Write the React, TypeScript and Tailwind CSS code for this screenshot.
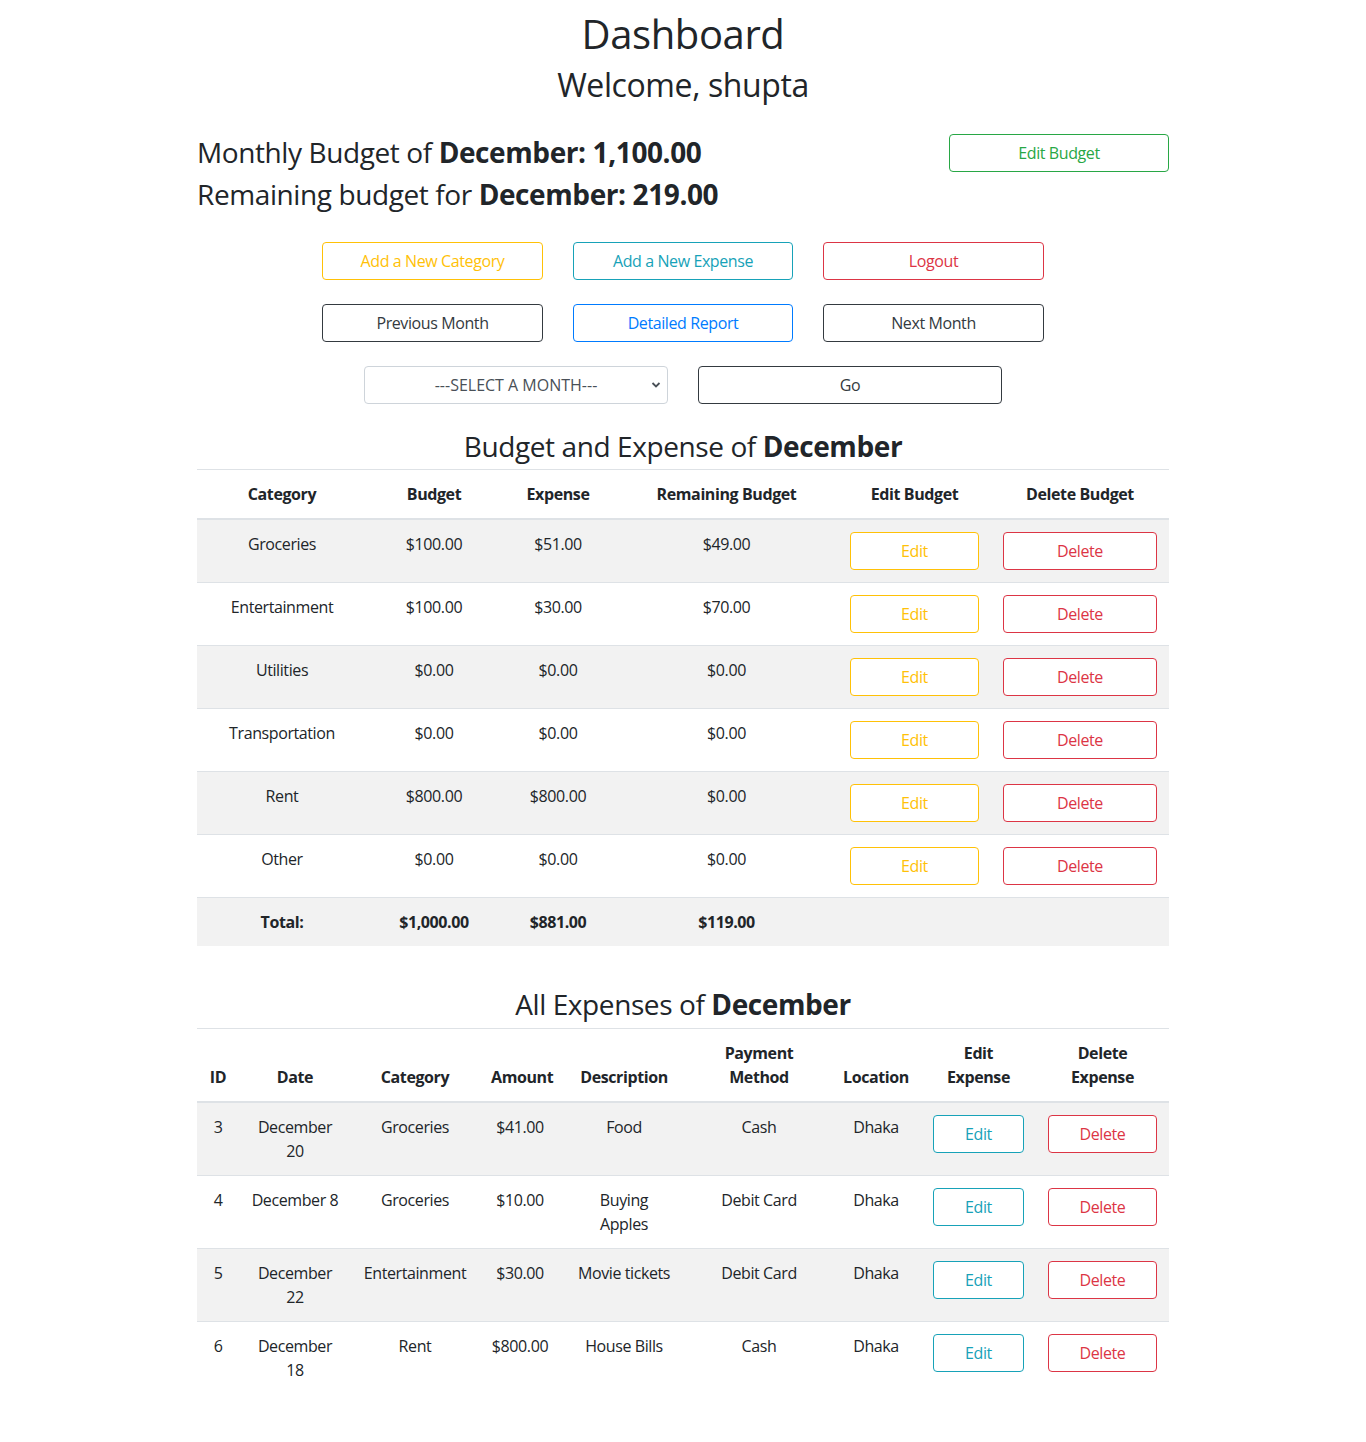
import React from "react";

const font = { fontFamily: '"Open Sans", "Noto Sans", sans-serif' };

const budgetRows = [
  ["Groceries", "$100.00", "$51.00", "$49.00"],
  ["Entertainment", "$100.00", "$30.00", "$70.00"],
  ["Utilities", "$0.00", "$0.00", "$0.00"],
  ["Transportation", "$0.00", "$0.00", "$0.00"],
  ["Rent", "$800.00", "$800.00", "$0.00"],
  ["Other", "$0.00", "$0.00", "$0.00"],
];

const expenses: { id: string; date: string[]; cat: string; amt: string; desc: string[]; pay: string; loc: string }[] = [
  { id: "3", date: ["December", "20"], cat: "Groceries", amt: "$41.00", desc: ["Food"], pay: "Cash", loc: "Dhaka" },
  { id: "4", date: ["December 8"], cat: "Groceries", amt: "$10.00", desc: ["Buying", "Apples"], pay: "Debit Card", loc: "Dhaka" },
  { id: "5", date: ["December", "22"], cat: "Entertainment", amt: "$30.00", desc: ["Movie tickets"], pay: "Debit Card", loc: "Dhaka" },
  { id: "6", date: ["December", "18"], cat: "Rent", amt: "$800.00", desc: ["House Bills"], pay: "Cash", loc: "Dhaka" },
];

function Lines({ lines }: { lines: string[] }) {
  return (
    <>
      {lines.map((l, i) => (
        <div key={i} className="whitespace-nowrap">
          {l}
        </div>
      ))}
    </>
  );
}

export default function App() {
  const td = "px-[12px] pt-[12px] pb-[12px] text-center align-top border-t border-[#dee2e6]";
  const th = "px-[12px] py-[12px] text-center align-bottom font-bold border-t border-b-2 border-[#dee2e6]";
  const btn = "h-[38px] rounded-[4px] border bg-white text-[16px] leading-[24px] px-[12px]";
  return (
    <div className="min-h-[1442px] bg-white text-[#212529] text-[16px] leading-[24px] tracking-[-0.025em]" style={font}>
      <div className="w-[972px] mx-auto">
        <h1 className="text-center text-[40px] leading-[48px] font-medium pt-[10px] mb-[8px]">Dashboard</h1>
        <h2 className="text-center text-[32px] leading-[38px] font-medium mb-[8px]">Welcome, shupta</h2>

        <div className="flex justify-between items-start mt-[31px]">
          <div>
            <h3 className="text-[28px] leading-[34px] font-medium mb-[8px]">
              Monthly Budget of <b className="font-bold">December: 1,100.00</b>
            </h3>
            <h3 className="text-[28px] leading-[34px] font-medium mb-[8px]">
              Remaining budget for <b className="font-bold">December: 219.00</b>
            </h3>
          </div>
          <button className={`${btn} w-[220px] mt-[-1px] border-[#28a745] text-[#28a745]`}>Edit Budget</button>
        </div>

        <div className="flex justify-center gap-[30px] mt-[23px]">
          <button className={`${btn} w-[221px] border-[#ffc107] text-[#ffc107]`}>Add a New Category</button>
          <button className={`${btn} w-[220px] border-[#17a2b8] text-[#17a2b8]`}>Add a New Expense</button>
          <button className={`${btn} w-[221px] border-[#dc3545] text-[#dc3545]`}>Logout</button>
        </div>
        <div className="flex justify-center gap-[30px] mt-[24px]">
          <button className={`${btn} w-[221px] border-[#343a40] text-[#343a40]`}>Previous Month</button>
          <button className={`${btn} w-[220px] border-[#007bff] text-[#007bff]`}>Detailed Report</button>
          <button className={`${btn} w-[221px] border-[#343a40] text-[#343a40]`}>Next Month</button>
        </div>
        <div className="flex justify-center gap-[30px] mt-[24px]">
          <div className="relative w-[304px] h-[38px] rounded-[4px] border border-[#ced4da] text-[#495057] flex items-center justify-center">
            <span className="tracking-normal">---SELECT A MONTH---</span>
            <svg className="absolute right-[6px] top-[14px]" width="10" height="8" viewBox="0 0 10 8">
              <path d="M1.5 2 L5 5.5 L8.5 2" fill="none" stroke="#495057" strokeWidth="1.8" />
            </svg>
          </div>
          <button className={`${btn} w-[304px] border-[#343a40] text-[#343a40]`}>Go</button>
        </div>

        <h3 className="text-center text-[28px] leading-[34px] font-medium mt-[25px] mb-[6px]">
          Budget and Expense of <b className="font-bold">December</b>
        </h3>
        <table className="w-full table-fixed border-collapse">
          <colgroup>
            <col className="w-[170px]" />
            <col className="w-[134px]" />
            <col className="w-[114px]" />
            <col className="w-[223px]" />
            <col className="w-[153px]" />
            <col className="w-[178px]" />
          </colgroup>
          <thead>
            <tr>
              <th className={th}>Category</th>
              <th className={th}>Budget</th>
              <th className={th}>Expense</th>
              <th className={th}>Remaining Budget</th>
              <th className={th}>Edit Budget</th>
              <th className={th}>Delete Budget</th>
            </tr>
          </thead>
          <tbody>
            {budgetRows.map((r, i) => (
              <tr key={i} className={i % 2 === 0 ? "bg-[#f2f2f2]" : "bg-white"}>
                <td className={td}>{r[0]}</td>
                <td className={td}>{r[1]}</td>
                <td className={td}>{r[2]}</td>
                <td className={td}>{r[3]}</td>
                <td className={td}>
                  <button className={`${btn} w-full border-[#ffc107] text-[#ffc107]`}>Edit</button>
                </td>
                <td className={td}>
                  <button className={`${btn} w-full border-[#dc3545] text-[#dc3545]`}>Delete</button>
                </td>
              </tr>
            ))}
            <tr className="bg-[#f2f2f2] font-bold">
              <td className={td}>Total:</td>
              <td className={td}>$1,000.00</td>
              <td className={td}>$881.00</td>
              <td className={td}>$119.00</td>
              <td className={td}></td>
              <td className={td}></td>
            </tr>
          </tbody>
        </table>

        <h3 className="text-center text-[28px] leading-[34px] font-medium mt-[41px] mb-[7px]">
          All Expenses of <b className="font-bold">December</b>
        </h3>
        <table className="w-full table-fixed border-collapse">
          <colgroup>
            <col className="w-[42px]" />
            <col className="w-[112px]" />
            <col className="w-[128px]" />
            <col className="w-[82px]" />
            <col className="w-[126px]" />
            <col className="w-[144px]" />
            <col className="w-[90px]" />
            <col className="w-[115px]" />
            <col className="w-[133px]" />
          </colgroup>
          <thead>
            <tr>
              <th className={th}>ID</th>
              <th className={th}>Date</th>
              <th className={th}>Category</th>
              <th className={th}>Amount</th>
              <th className={th}>Description</th>
              <th className={th}>
                <Lines lines={["Payment", "Method"]} />
              </th>
              <th className={th}>Location</th>
              <th className={th}>
                <Lines lines={["Edit", "Expense"]} />
              </th>
              <th className={th}>
                <Lines lines={["Delete", "Expense"]} />
              </th>
            </tr>
          </thead>
          <tbody>
            {expenses.map((e, i) => (
              <tr key={e.id} className={i % 2 === 0 ? "bg-[#f2f2f2]" : "bg-white"}>
                <td className={`${td} h-[73px]`}>{e.id}</td>
                <td className={td}>
                  <Lines lines={e.date} />
                </td>
                <td className={td}>{e.cat}</td>
                <td className={td}>{e.amt}</td>
                <td className={td}>
                  <Lines lines={e.desc} />
                </td>
                <td className={td}>{e.pay}</td>
                <td className={td}>{e.loc}</td>
                <td className={td}>
                  <button className={`${btn} w-full border-[#17a2b8] text-[#17a2b8]`}>Edit</button>
                </td>
                <td className={td}>
                  <button className={`${btn} w-full border-[#dc3545] text-[#dc3545]`}>Delete</button>
                </td>
              </tr>
            ))}
          </tbody>
        </table>
      </div>
    </div>
  );
}
